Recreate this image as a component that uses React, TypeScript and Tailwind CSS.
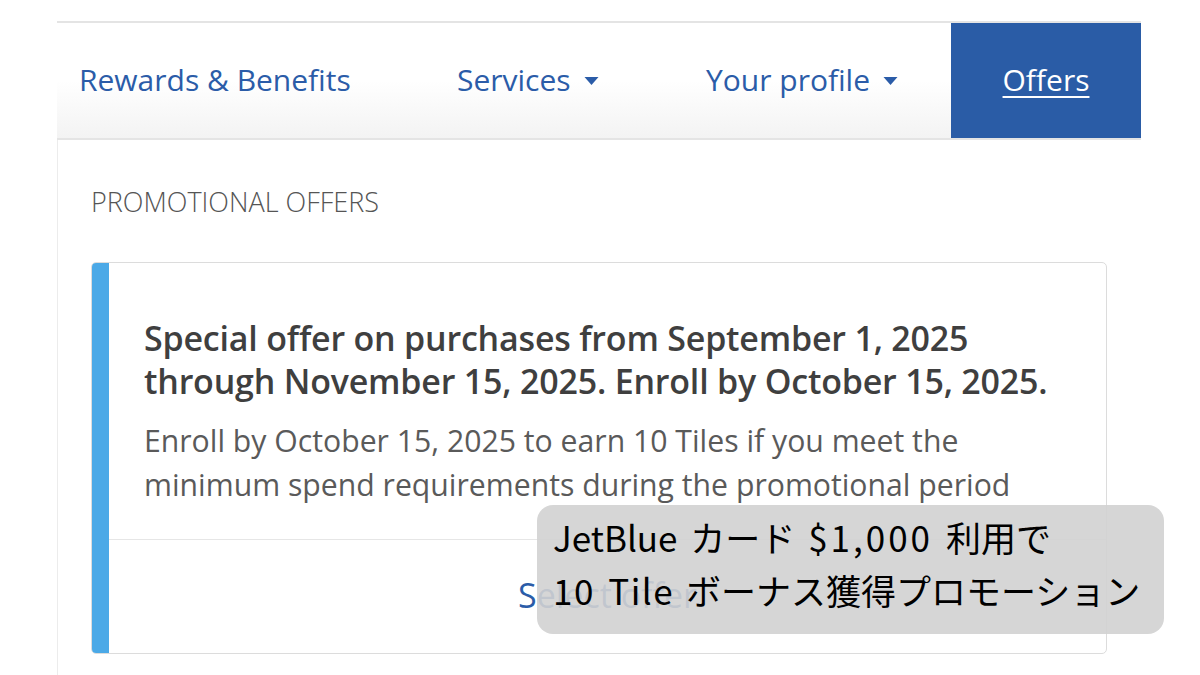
import React from 'react';

const Caret: React.FC<{ className?: string }> = ({ className }) => (
  <svg viewBox="0 0 14 8" className={className} fill="currentColor">
    <path d="M0 0h14L7 8z" />
  </svg>
);

const App: React.FC = () => {
  return (
    <div className="relative w-[1200px] h-[675px] overflow-hidden bg-white font-['Open_Sans','Noto_Sans',sans-serif]">
      <div className="pt-[21px] pl-[57px] w-[1141px]">
        {/* top navigation */}
        <nav className="flex h-[119px] border-t-2 border-b-2 border-[#e4e4e4] bg-gradient-to-b from-white via-white to-[#f3f3f3] text-[30px] text-[#2b5ca8]">
          <a className="w-[347px] pl-[22px] flex items-center pb-[3px]">Rewards &amp; Benefits</a>
          <a className="w-[249px] pl-[53px] flex items-center gap-[13px] pb-[3px]">
            <span>Services</span>
            <Caret className="w-[15px] h-[8px] mt-[3px]" />
          </a>
          <a className="w-[298px] pl-[53px] flex items-center gap-[13px] pb-[3px]">
            <span>Your profile</span>
            <Caret className="w-[15px] h-[8px] mt-[3px]" />
          </a>
          <a className="w-[190px] bg-[#2a5ca6] text-white underline underline-offset-[5px] decoration-2 flex items-center justify-center pb-[3px]">
            Offers
          </a>
        </nav>

        {/* offers panel */}
        <section className="border-l border-[#ececec] h-[540px] pl-[33px] pr-[34px]">
          <h2 className="pt-[44px] text-[27px] leading-[36px] text-[#555] font-light">PROMOTIONAL OFFERS</h2>
          <div className="mt-[42px] flex h-[392px] rounded-[5px] border border-[#dcdcdc] overflow-hidden">
            <div className="w-[17px] shrink-0 bg-[#4ba9e7]" />
            <div className="flex-1 flex flex-col">
              <div className="pl-[35px] pr-[20px] pt-[54px] pb-[32px] border-b border-[#e6e6e6]">
                <h3 className="text-[34px] leading-[43px] font-semibold text-[#3f3f3f] whitespace-nowrap tracking-[-0.2px]">
                  Special offer on purchases from September 1, 2025
                  <br />
                  through November 15, 2025. Enroll by October 15, 2025.
                </h3>
                <p className="mt-[16px] text-[30.2px] leading-[44px] text-[#5a5a5a] whitespace-nowrap">
                  Enroll by October 15, 2025 to earn 10 Tiles if you meet the
                  <br />
                  minimum spend requirements during the promotional period
                </p>
              </div>
              <div className="flex-1 flex items-center justify-center pb-[2px]">
                <a className="text-[34px] text-[#2b5ca8]">Select offer</a>
              </div>
            </div>
          </div>
        </section>
      </div>

      {/* caption overlay */}
      <div className="absolute left-[537px] top-[505px] w-[627px] h-[129px] rounded-[16px] bg-[#d2d2d2]/90 pl-[16px] pt-[5px] text-[35px] leading-[53px] text-black font-['Noto_Sans_CJK_JP','Noto_Sans',sans-serif]">
        <div className="[word-spacing:5px]">
          JetBlue カード <span className="tracking-[3px]">$1,000</span> 利用で
        </div>
        <div className="[word-spacing:4px]">
          <span className="tracking-[1.5px]">10 Tile</span> ボーナス獲得プロモーション
        </div>
      </div>
    </div>
  );
};

export default App;
